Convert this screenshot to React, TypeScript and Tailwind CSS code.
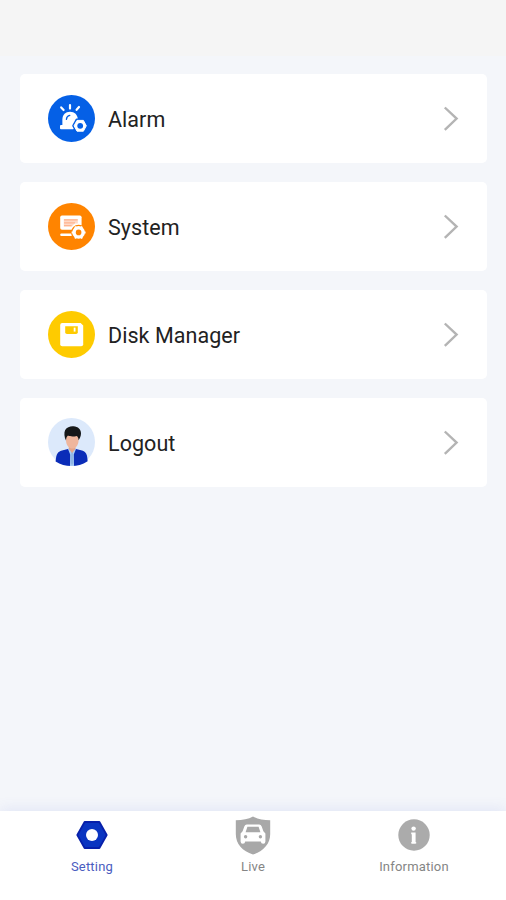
import type { ReactNode } from 'react';

type MenuItem = {
  label: string;
  icon: ReactNode;
};

type TabItem = {
  label: string;
  icon: ReactNode;
  active?: boolean;
};

const HEX_GEAR = 'M-3.6 -6.2H3.6L7 0L3.6 6.2H-3.6L-7 0Z';

function AlarmIcon() {
  return (
    <svg viewBox="0 0 47 47" className="size-[47px]">
      <circle cx="23.5" cy="23.5" r="23.5" fill="#0560e6" />
      <g stroke="#fff" strokeWidth="2.2" strokeLinecap="round">
        <path d="M22 10.2V13.6M13.2 12.4L15.6 15M31 12L28.6 14.8" />
      </g>
      <path d="M14.4 31V24.6C14.4 19.8 17.6 16.8 22 16.8C26.6 16.8 29.6 19.8 29.8 24.2L26 31Z" fill="#fff" />
      <path d="M18.4 24.4C18.6 22 19.8 20.8 21.8 20.4" fill="none" stroke="#0560e6" strokeWidth="1.3" strokeLinecap="round" />
      <rect x="12" y="30" width="14" height="4.2" rx="1" fill="#fff" />
      <g transform="translate(32.2 30.8)">
        <path d={HEX_GEAR} fill="#0560e6" stroke="#0560e6" strokeWidth="2" strokeLinejoin="round" />
        <path d="M-3.2 -5.4H3.2L6.1 0L3.2 5.4H-3.2L-6.1 0Z" fill="#fff" stroke="#fff" strokeLinejoin="round" />
        <circle r="2.9" fill="#0560e6" />
      </g>
    </svg>
  );
}

function SystemIcon() {
  return (
    <svg viewBox="0 0 47 47" className="size-[47px]">
      <circle cx="23.5" cy="23.5" r="23.5" fill="#ff8400" />
      <rect x="12.2" y="12.4" width="21.4" height="14.4" rx="1.8" fill="#fff" />
      <path d="M15.8 16H29.8V20.4H26.5L24 23.4H15.8Z" fill="#ffd9c6" />
      <path d="M16 16.8H29.6M16 19.8H27M16 22.6H23.6" stroke="#ffb48f" strokeWidth="1.3" />
      <path d="M13.4 31.8H23" stroke="#fff" strokeWidth="2.4" strokeLinecap="round" />
      <g transform="translate(30.6 29.4)">
        <circle r="7.6" fill="#ff8400" />
        <circle r="6.3" fill="#fff" />
        <path d="M-7 0H7M-3.5 -6L3.5 6M3.5 -6L-3.5 6" stroke="#fff" strokeWidth="2" />
        <circle r="2.8" fill="#ff8400" />
      </g>
    </svg>
  );
}

function DiskIcon() {
  return (
    <svg viewBox="0 0 47 47" className="size-[47px]">
      <circle cx="23.5" cy="23.5" r="23.5" fill="#fecb00" />
      <path d="M14.2 12H32.6L35.2 14.6V33.2Q35.2 35.2 33.2 35.2H14.2Q12.2 35.2 12.2 33.2V14Q12.2 12 14.2 12Z" fill="#fff" />
      <path d="M17.2 15.2H29.8V21.2Q29.8 23 28 23H19Q17.2 23 17.2 21.2Z" fill="#fecb00" />
      <path d="M26.6 16.6V20.6" stroke="#fff" strokeWidth="1.8" />
    </svg>
  );
}

function UserIcon() {
  return (
    <svg viewBox="0 0 47 48" className="mb-px h-12 w-[47px]">
      <ellipse cx="23.5" cy="24" rx="23.5" ry="24" fill="#dce9fb" />
      <path d="M7.6 43.5C8.2 36 9.5 33.5 14 32.4L20 31H28L34 32.4C38 33.5 39.4 36.5 39.6 43.2C34.5 46.7 29 48 23.5 48C17.6 48 12.4 46.6 7.6 43.5Z" fill="#0a2cb8" />
      <path d="M19.8 30.6H28.2L25.8 36.5L26 47.9H22L22.2 36.5Z" fill="#a9cdf5" />
      <path d="M23.3 34H24.9L25.4 45L24 47.6L22.8 45Z" fill="#8fb5e4" />
      <path d="M20.8 26H27.4V31L24.1 35L20.8 31Z" fill="#e3a58b" />
      <path d="M18 17H30.6V22C30.6 27 27.6 30.6 24.3 30.6C21 30.6 18 27 18 22Z" fill="#efb69d" />
      <path d="M18 22.5C16.3 19.5 15.8 14.8 17.2 12.1C19 9 22.4 8 25.5 8.3C30 8.6 33.2 11.5 33 15.6C32.9 18.5 31.8 20.4 30.6 22.3C30.5 20 30 18.7 28.8 17.9C25.5 18.8 22 18.6 20 17.6C18.6 18.8 18.1 20.3 18 22.5Z" fill="#151719" />
    </svg>
  );
}

function SettingIcon() {
  return (
    <svg viewBox="0 0 32 28" className="h-7 w-8">
      <path d="M8.6 1H23.4L30.7 14L23.4 27H8.6L1.3 14Z" fill="#0a35c1" stroke="#0720aa" strokeWidth="1.8" strokeLinejoin="round" />
      <circle cx="16" cy="14" r="6" fill="#fff" />
    </svg>
  );
}

function LiveIcon() {
  return (
    <svg viewBox="0 0 36 39" className="h-[39px] w-9">
      <path d="M18 .4C22.5 3 28.5 4 35.2 4.2V18C35.2 28 28.5 35 18 38.6C7.5 35 .8 28 .8 18V4.2C7.5 4 13.5 3 18 .4Z" fill="#a8a8a8" />
      <path
        d="M11.8 8.4H24.2Q26 8.4 26.7 10.4L28.4 15.2L30.4 17.6V25.4Q30.4 27.8 28.2 27.8Q26 27.8 25.8 25.6H10.2Q10 27.8 7.8 27.8Q5.6 27.8 5.6 25.4V17.6L7.6 15.2L9.3 10.4Q10 8.4 11.8 8.4Z"
        fill="#fff"
      />
      <path d="M12.4 10.8H23.6L25.4 16.2H10.6Z" fill="#a8a8a8" />
      <circle cx="10.6" cy="20.8" r="1.7" fill="#a8a8a8" />
      <circle cx="25.4" cy="20.8" r="1.7" fill="#a8a8a8" />
    </svg>
  );
}

function InformationIcon() {
  return (
    <svg viewBox="0 0 32 32" className="size-8">
      <circle cx="16" cy="16" r="15.7" fill="#ababab" />
      <circle cx="15.6" cy="9.6" r="2.2" fill="#fff" />
      <path d="M13.2 13.4H17.6V24.4H13.8V15.2H13.2Z" fill="#fff" />
      <path d="M13.2 23.8H18.2" stroke="#fff" strokeWidth="1.4" />
    </svg>
  );
}

const MENU_ITEMS: MenuItem[] = [
  { label: 'Alarm', icon: <AlarmIcon /> },
  { label: 'System', icon: <SystemIcon /> },
  { label: 'Disk Manager', icon: <DiskIcon /> },
  { label: 'Logout', icon: <UserIcon /> },
];

const TAB_ITEMS: TabItem[] = [
  { label: 'Setting', icon: <SettingIcon />, active: true },
  { label: 'Live', icon: <LiveIcon /> },
  { label: 'Information', icon: <InformationIcon /> },
];

function MenuRow({ label, icon }: MenuItem) {
  return (
    <button type="button" className="flex h-[89px] w-full items-center rounded-[5px] bg-white px-7 text-left">
      {icon}
      <span className="ml-[13px] flex-1 pt-[3px] text-[21.5px] tracking-[0.05px] text-[#222]">{label}</span>
      <svg viewBox="0 0 16 26" className="h-[26px] w-4" fill="none" stroke="#b4b4b4" strokeWidth="2.4">
        <path d="M1.8 1.5L13.6 12.6L1.8 23.8" />
      </svg>
    </button>
  );
}

function TabButton({ label, icon, active }: TabItem) {
  return (
    <button type="button" className="flex w-[161px] flex-col items-center">
      <span className="flex h-12 items-center justify-center">{icon}</span>
      <span className={`text-[13px] leading-4 tracking-[0.2px] ${active ? 'text-[#4a5cc0]' : 'text-[#858585]'}`}>
        {label}
      </span>
    </button>
  );
}

export default function App() {
  return (
    <div className="flex h-[900px] w-[506px] flex-col overflow-hidden bg-[#f4f6fa] font-['Roboto',sans-serif]">
      <header className="h-14 shrink-0 bg-[#f5f5f5]" />
      <main className="flex flex-1 flex-col gap-[19px] pt-[18px] pr-[19px] pl-5">
        {MENU_ITEMS.map((item) => (
          <MenuRow key={item.label} {...item} />
        ))}
      </main>
      <nav className="flex h-[89px] shrink-0 items-start justify-center bg-white shadow-[0_-3px_12px_rgba(90,110,220,0.1)]">
        {TAB_ITEMS.map((item) => (
          <TabButton key={item.label} {...item} />
        ))}
      </nav>
    </div>
  );
}
